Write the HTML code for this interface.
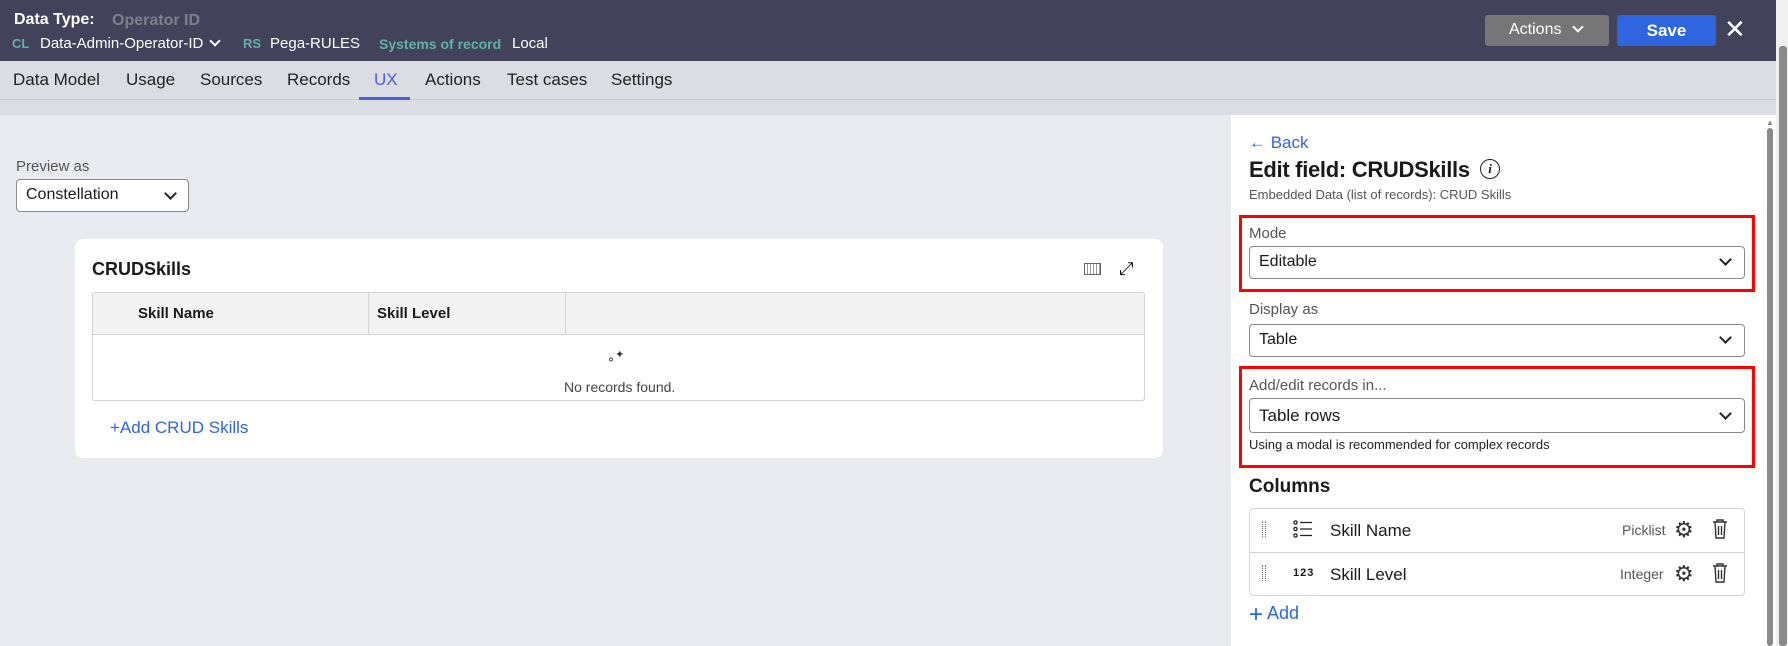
<!DOCTYPE html>
<html><head><meta charset="utf-8"><style>
*{box-sizing:border-box;margin:0;padding:0}
body{width:1788px;height:646px;overflow:hidden;background:#e9ebf0;font-family:"Liberation Sans",sans-serif;color:#1a1a1a;position:relative;font-size:16px}
.a{position:absolute;white-space:nowrap}
.hdr{left:0;top:0;width:1776px;height:61px;background:#42425a}
.tabs{left:0;top:61px;width:1776px;height:39px;background:#dcdde2;border-bottom:1px solid #c8c9ce}
.strip{left:0;top:100px;width:1776px;height:15px;background:#dcdde2}
.sel{position:absolute;background:#fff;border:1px solid #8a8a8a;border-radius:4px}
.chev{position:absolute;width:9px;height:9px;border-right:2px solid #222;border-bottom:2px solid #222;transform:rotate(45deg)}
.red{position:absolute;border:3px solid #f00}
.lbl{color:#555;font-size:15px}
</style></head><body>
<div class="a hdr"></div>
<div class="a" style="left:14px;top:11px;color:#fff;font-weight:bold;font-size:16px">Data Type:</div>
<div class="a" style="left:112px;top:12px;color:#7f7f8a;font-weight:bold;font-size:16px">Operator ID</div>
<div class="a" style="left:12px;top:36px;color:#5fb3a8;font-weight:bold;font-size:13px">CL</div>
<div class="a" style="left:40px;top:35px;color:#fff;font-size:15px">Data-Admin-Operator-ID</div>
<div class="chev" style="left:211px;top:37px;border-color:#fff;width:8px;height:8px"></div>
<div class="a" style="left:243px;top:36px;color:#5fb3a8;font-weight:bold;font-size:13px">RS</div>
<div class="a" style="left:270px;top:35px;color:#fff;font-size:15px">Pega-RULES</div>
<div class="a" style="left:379px;top:36px;color:#5fb3a8;font-weight:bold;font-size:14px">Systems of record</div>
<div class="a" style="left:512px;top:35px;color:#fff;font-size:15px">Local</div>
<div class="a" style="left:1485px;top:15px;width:124px;height:31px;background:#767676;border-radius:3px;color:#fff;font-size:16px;padding:6px 0 0 24px">Actions</div>
<div class="chev" style="left:1574px;top:23px;border-color:#fff;width:8px;height:8px"></div>
<div class="a" style="left:1617px;top:15px;width:99px;height:31px;background:#2f66e0;border-radius:3px;color:#fff;font-weight:bold;font-size:17px;text-align:center;padding-top:6px">Save</div>
<div class="a" style="left:1724px;top:14px;color:#fff;font-size:26px;line-height:30px">✕</div>
<div class="a tabs"></div>
<div class="a strip"></div>
<div class="a" style="left:13px;top:70px;font-size:17px;color:#222">Data Model</div>
<div class="a" style="left:126px;top:70px;font-size:17px;color:#222">Usage</div>
<div class="a" style="left:200px;top:70px;font-size:17px;color:#222">Sources</div>
<div class="a" style="left:287px;top:70px;font-size:17px;color:#222">Records</div>
<div class="a" style="left:374px;top:70px;font-size:17px;color:#4a5ee8">UX</div>
<div class="a" style="left:359px;top:97px;width:51px;height:3px;background:#4a5ee8"></div>
<div class="a" style="left:425px;top:70px;font-size:17px;color:#222">Actions</div>
<div class="a" style="left:507px;top:70px;font-size:17px;color:#222">Test cases</div>
<div class="a" style="left:611px;top:70px;font-size:17px;color:#222">Settings</div>
<div class="a" style="left:1776px;top:0;width:12px;height:646px;background:#f0f0f0"></div>
<div class="a" style="left:1779px;top:46px;width:8px;height:600px;background:#8a8a8a;border-radius:3px"></div>

<div class="a lbl" style="left:16px;top:158px;font-size:15px;color:#555">Preview as</div>
<div class="sel" style="left:16px;top:179px;width:173px;height:33px"></div>
<div class="a" style="left:26px;top:186px;font-size:16px">Constellation</div>
<div class="chev" style="left:166px;top:189px"></div>

<div class="a" style="left:75px;top:239px;width:1088px;height:219px;background:#fff;border-radius:8px"></div>
<div class="a" style="left:92px;top:259px;font-size:18px;font-weight:bold">CRUDSkills</div>
<div class="a" style="left:1084px;top:263px;width:17px;height:12px;border:1px solid #666;background:repeating-linear-gradient(90deg,#fff 0 2px,#999 2px 3px)"></div>
<div class="a" style="left:1119px;top:258px;font-size:18px;transform:rotate(90deg)">⤡</div>
<div class="a" style="left:92px;top:292px;width:1053px;height:109px;border:1px solid #d4d4d4;border-radius:3px"></div>
<div class="a" style="left:93px;top:293px;width:1051px;height:42px;background:#f3f3f3;border-bottom:1px solid #d4d4d4"></div>
<div class="a" style="left:368px;top:293px;width:1px;height:42px;background:#d4d4d4"></div>
<div class="a" style="left:565px;top:293px;width:1px;height:42px;background:#d4d4d4"></div>
<div class="a" style="left:138px;top:305px;font-size:15px;font-weight:bold">Skill Name</div>
<div class="a" style="left:377px;top:305px;font-size:15px;font-weight:bold">Skill Level</div>
<div class="a" style="left:607px;top:348px;font-size:13px;color:#333">∘<sup>✦</sup></div>
<div class="a" style="left:564px;top:379px;font-size:14px;color:#444">No records found.</div>
<div class="a" style="left:110px;top:418px;font-size:17px;color:#2f66e0">+Add CRUD Skills</div>

<div class="a" style="left:1231px;top:115px;width:545px;height:531px;background:#fff"></div>
<div class="a" style="left:1766px;top:118px;font-size:8px;color:#888">▲</div>
<div class="a" style="left:1767px;top:128px;width:6px;height:518px;background:#8a8a8a;border-radius:3px"></div>
<div class="a" style="left:1249px;top:133px;font-size:17px;color:#2f66e0">← Back</div>
<div class="a" style="left:1249px;top:157px;font-size:22px;font-weight:bold;letter-spacing:-0.3px">Edit field: CRUDSkills</div>
<div class="a" style="left:1480px;top:159px;width:20px;height:20px;border:1.5px solid #222;border-radius:50%;font:italic bold 13px 'Liberation Serif',serif;text-align:center;line-height:17px">i</div>
<div class="a" style="left:1249px;top:187px;font-size:13px;color:#555">Embedded Data (list of records): CRUD Skills</div>

<div class="red" style="left:1239px;top:215px;width:516px;height:77px"></div>
<div class="a lbl" style="left:1249px;top:225px">Mode</div>
<div class="sel" style="left:1249px;top:246px;width:496px;height:33px"></div>
<div class="a" style="left:1259px;top:253px">Editable</div>
<div class="chev" style="left:1721px;top:255px"></div>

<div class="a lbl" style="left:1249px;top:301px">Display as</div>
<div class="sel" style="left:1249px;top:324px;width:496px;height:33px"></div>
<div class="a" style="left:1259px;top:331px">Table</div>
<div class="chev" style="left:1721px;top:333px"></div>

<div class="red" style="left:1239px;top:366px;width:516px;height:102px"></div>
<div class="a lbl" style="left:1249px;top:377px">Add/edit records in...</div>
<div class="sel" style="left:1249px;top:398px;width:496px;height:35px"></div>
<div class="a" style="left:1259px;top:406px;font-size:17px">Table rows</div>
<div class="chev" style="left:1721px;top:409px"></div>
<div class="a" style="left:1249px;top:437px;font-size:13px;color:#222">Using a modal is recommended for complex records</div>

<div class="a" style="left:1249px;top:476px;font-size:19px;font-weight:bold">Columns</div>
<div class="a" style="left:1249px;top:508px;width:496px;height:88px;border:1px solid #d4d4d4;border-radius:4px"></div>
<div class="a" style="left:1250px;top:552px;width:494px;height:1px;background:#d4d4d4"></div>
<div class="a" style="left:1262px;top:521px;width:4px;height:16px;border-left:1px dotted #777;border-right:1px dotted #777"></div>
<div class="a" style="left:1262px;top:565px;width:4px;height:16px;border-left:1px dotted #777;border-right:1px dotted #777"></div>
<svg class="a" style="left:1293px;top:520px" width="20" height="18" viewBox="0 0 20 18" fill="none" stroke="#222" stroke-width="1.3"><circle cx="2.5" cy="2.5" r="1.6"/><circle cx="2.5" cy="9" r="1.6"/><circle cx="2.5" cy="15.5" r="1.6"/><path d="M7 2.5h12M7 9h12M7 15.5h12"/></svg>
<div class="a" style="left:1293px;top:567px;font-size:11px;font-weight:bold;letter-spacing:1px">123</div>
<div class="a" style="left:1330px;top:521px;font-size:17px">Skill Name</div>
<div class="a" style="left:1330px;top:565px;font-size:17px">Skill Level</div>
<div class="a" style="left:1622px;top:522px;font-size:14px;color:#555">Picklist</div>
<div class="a" style="left:1620px;top:566px;font-size:14px;color:#555">Integer</div>
<div class="a" style="left:1674px;top:517px;font-size:22px;color:#333">⚙</div>
<div class="a" style="left:1674px;top:561px;font-size:22px;color:#333">⚙</div>
<svg class="a" style="left:1712px;top:519px" width="16" height="20" viewBox="0 0 16 20" fill="none" stroke="#333" stroke-width="1.4"><path d="M1 3h14M5 3V1h6v2M3 3l1 16h8l1-16M6.5 7v9M9.5 7v9"/></svg>
<svg class="a" style="left:1712px;top:563px" width="16" height="20" viewBox="0 0 16 20" fill="none" stroke="#333" stroke-width="1.4"><path d="M1 3h14M5 3V1h6v2M3 3l1 16h8l1-16M6.5 7v9M9.5 7v9"/></svg>
<div class="a" style="left:1249px;top:603px;font-size:18px;color:#2f66e0"><span style="font-size:24px;line-height:20px;vertical-align:-3px">+</span> Add</div>
</body></html>
